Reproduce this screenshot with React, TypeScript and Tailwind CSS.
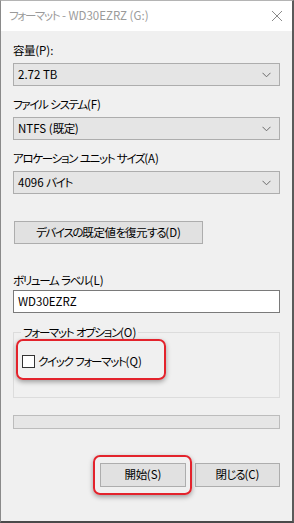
import React from "react";

// Kana runs are tightened to match the narrow UI font in the screenshot;
// kanji a little, latin text, spaces and brackets not at all.
function T({ s }: { s: string }) {
  const parts = s.split(/([\u3040-\u30ff]+|[\u3400-\u9fff]+)/);
  return (
    <>
      {parts.map((p, i) => {
        if (i % 2 === 0) return <React.Fragment key={i}>{p}</React.Fragment>;
        const kana = /[\u3040-\u30ff]/.test(p);
        return (
          <span key={i} className={kana ? "tracking-[-1.3px]" : "tracking-[-0.4px]"}>
            {p}
          </span>
        );
      })}
    </>
  );
}

function Select({ value }: { value: string }) {
  return (
    <div className="flex h-[23px] items-center justify-between border border-[#adadad] bg-[#e5e5e5] pr-[8px] pl-[4px]">
      <span className="leading-none whitespace-pre text-black">
        <T s={value} />
      </span>
      <svg width="9" height="6" viewBox="0 0 9 6" fill="none">
        <path d="M0.5 0.8 L4.5 4.8 L8.5 0.8" stroke="#6b6b6b" strokeWidth="1" />
      </svg>
    </div>
  );
}

function Field({ label, value }: { label: string; value: string }) {
  return (
    <div className="flex flex-col">
      <div className="h-[16px] leading-[16px] whitespace-pre text-black">
        <T s={label} />
      </div>
      <div className="mt-[5px]">
        <Select value={value} />
      </div>
    </div>
  );
}

export default function App() {
  return (
    <div className="flex h-[523px] w-[294px] flex-col overflow-hidden border-t border-r-2 border-b-2 border-l border-t-[#b4b4b4] border-r-[#5a5a5a] border-b-[#4a4a4a] border-l-[#8a8a8a] bg-[#f0f0f0] font-['Noto_Sans_CJK_JP','Noto_Sans',sans-serif] text-[11.5px] [font-feature-settings:'palt']">
      {/* Title bar */}
      <div className="flex h-[30px] shrink-0 items-center justify-between bg-white pr-[9px] pl-[8px]">
        <span className="whitespace-pre text-[#9a9a9a]">
          <T s="フォーマット - WD30EZRZ (G:)" />
        </span>
        <svg width="12" height="12" viewBox="0 0 12 12" fill="none">
          <path d="M1 1 L11 11 M11 1 L1 11" stroke="#8a8a8a" strokeWidth="1" />
        </svg>
      </div>

      {/* Body */}
      <div className="flex flex-col px-[12px] pt-[11px]">
        <div className="flex flex-col gap-[10px]">
          <Field label="容量(P):" value="2.72 TB" />
          <Field label="ファイル システム(F)" value="NTFS (既定)" />
          <Field label="アロケーション ユニット サイズ(A)" value="4096 バイト" />
        </div>

        <button className="mt-[27px] ml-[1px] h-[23px] w-[189px] border border-[#adadad] bg-[#e1e1e1] text-black">
          <T s="デバイスの既定値を復元する(D)" />
        </button>

        <div className="mt-[28px] h-[16px] leading-[16px] whitespace-pre text-black">
          <T s="ボリューム ラベル(L)" />
        </div>
        <div className="mt-[2px] flex h-[23px] items-center border border-[#7a7a7a] bg-white pl-[4px] text-black">
          WD30EZRZ
        </div>

        {/* Format options group */}
        <div className="relative mt-[19px] h-[66px] border border-[#dcdcdc]">
          <span className="absolute -top-[9px] left-[7px] bg-[#f0f0f0] px-[2px] leading-[16px] whitespace-pre text-black">
            <T s="フォーマット オプション(O)" />
          </span>
          <div className="mt-[20px] ml-[8px] flex items-center gap-[3px]">
            <span className="h-[13px] w-[13px] border border-[#333333] bg-white" />
            <span className="leading-[16px] whitespace-pre text-black">
              <T s="クイック フォーマット(Q)" />
            </span>
          </div>
          <div className="absolute top-[6px] left-[2px] h-[41px] w-[150px] rounded-[7px] border-2 border-[#e3232c] shadow-[0_2px_5px_rgba(0,0,0,0.35)]" />
        </div>

        {/* Progress */}
        <div className="mt-[17px] h-[14px] border border-[#bcbcbc] bg-[#e6e6e6]" />

        {/* Buttons */}
        <div className="mt-[34px] flex justify-end gap-[9px]">
          <div className="relative">
            <button className="h-[24px] w-[86px] border border-[#adadad] bg-[#e1e1e1] text-black">
              <T s="開始(S)" />
            </button>
            <div className="absolute -top-[8px] -left-[7px] h-[40px] w-[99px] rounded-[7px] border-2 border-[#e3232c] shadow-[0_2px_5px_rgba(0,0,0,0.35)]" />
          </div>
          <button className="h-[24px] w-[85px] border border-[#adadad] bg-[#e1e1e1] text-black">
            <T s="閉じる(C)" />
          </button>
        </div>
      </div>
    </div>
  );
}
